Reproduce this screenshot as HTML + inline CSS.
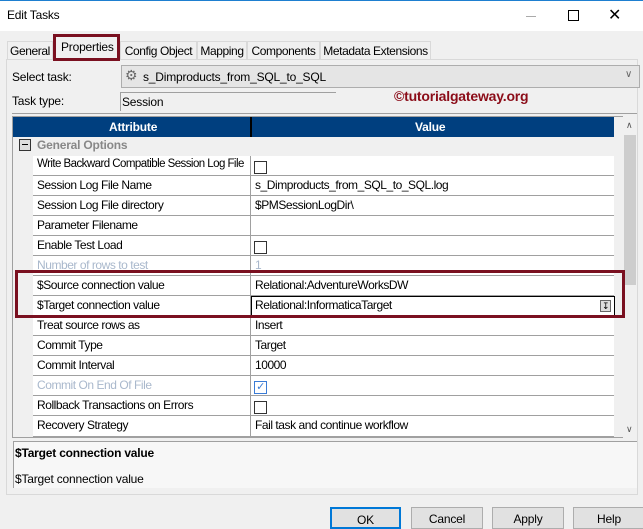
<!DOCTYPE html>
<html><head><style>
*{margin:0;padding:0;box-sizing:border-box}
body{width:643px;height:525px;background:#f0f0f0;font-family:"Liberation Sans",Arial,sans-serif;font-size:12px;color:#000;position:relative;overflow:hidden;letter-spacing:-0.2px}
.a{position:absolute}
.t{position:absolute;white-space:nowrap}
.row{position:absolute;left:33px;width:581px;height:20px;border-bottom:1px solid #a0a0a0;background:#fff;letter-spacing:-0.45px}
.row .l{position:absolute;left:4px;top:2px;white-space:nowrap}
.row .v{position:absolute;left:222px;top:2px;white-space:nowrap}
.row .d{position:absolute;left:217px;top:0;width:1px;height:20px;background:#a0a0a0}
.cb{position:absolute;left:221px;top:5px;width:13px;height:13px;border:1px solid #333;background:#fff}
.g{color:#a9b8cc}
.tab{position:absolute;top:41px;height:18px;border:1px solid #d9d9d9;border-bottom:none;background:#f0f0f0;padding:2px 0 0 0;text-align:center;letter-spacing:-0.4px}
.btn{position:absolute;top:507px;height:22px;border:1px solid #adadad;background:#e1e1e1;text-align:center;padding-top:4px}
</style></head><body>
<div class="a" style="left:0;top:0;width:643px;height:31px;background:#fff;border-top:1px solid #1e7fd0"></div>
<div class="t" style="left:7px;top:8px;font-size:12px">Edit Tasks</div>
<div class="a" style="left:526px;top:16px;width:10px;height:1px;background:#aaa"></div>
<div class="a" style="left:568px;top:10px;width:11px;height:11px;border:1px solid #000"></div>
<div class="t" style="left:608px;top:5px;font-size:16px">✕</div>

<div class="a" style="left:6px;top:59px;width:632px;height:436px;border:1px solid #d9d9d9;background:#f0f0f0"></div>
<div class="tab" style="left:7px;width:46px">General</div>
<div class="tab" style="left:120px;width:77px">Config Object</div>
<div class="tab" style="left:197px;width:50px">Mapping</div>
<div class="tab" style="left:247px;width:73px">Components</div>
<div class="tab" style="left:320px;width:111px">Metadata Extensions</div>
<div class="a" style="left:53px;top:34px;width:67px;height:27px;border:3px solid #7a1020;background:#f0f0f0"></div>
<div class="t" style="left:61px;top:40px">Properties</div>

<div class="t" style="left:12px;top:70px">Select task:</div>
<div class="a" style="left:121px;top:65px;width:519px;height:23px;border:1px solid #adadad;background:#e5e5e5"></div>
<div class="t" style="left:125px;top:67px;font-size:14px;color:#666">⚙</div>
<div class="t" style="left:143px;top:70px">s_Dimproducts_from_SQL_to_SQL</div>
<div class="t" style="left:625px;top:69px;color:#666;font-size:10px">∨</div>
<div class="t" style="left:12px;top:94px">Task type:</div>
<div class="a" style="left:120px;top:92px;width:216px;height:19px;border-top:1px solid #a0a0a0;border-left:1px solid #a0a0a0"></div>
<div class="t" style="left:122px;top:95px">Session</div>
<div class="t" style="left:394px;top:88px;font-weight:bold;font-size:14px;color:#8b0c18">©tutorialgateway.org</div>
<div class="a" style="left:12px;top:113px;width:625px;height:1px;background:#a0a0a0"></div>

<div class="a" style="left:12px;top:116px;width:611px;height:322px;border:1px solid #a0a0a0;background:#f0f0f0"></div>
<div class="a" style="left:13px;top:117px;width:601px;height:20px;background:#003f7f"></div>
<div class="a" style="left:250px;top:117px;width:2px;height:20px;background:#000"></div>
<div class="t" style="left:109px;top:120px;color:#fff;font-weight:bold">Attribute</div>
<div class="t" style="left:415px;top:120px;color:#fff;font-weight:bold">Value</div>
<div class="a" style="left:622px;top:117px;width:15px;height:320px;background:#f0f0f0"></div>
<div class="a" style="left:624px;top:135px;width:12px;height:150px;background:#cdcdcd"></div>
<div class="t" style="left:626px;top:120px;font-size:9px;color:#555">∧</div>
<div class="t" style="left:626px;top:424px;font-size:9px;color:#555">∨</div>
<div class="a" style="left:19px;top:139px;width:12px;height:12px;border:1px solid #333;background:#ddd"></div>
<div class="a" style="left:22px;top:144px;width:6px;height:1px;background:#000"></div>
<div class="t" style="left:37px;top:138px;font-weight:bold;color:#888">General Options</div>

<div class="row" style="top:156px"><span class="l" style="font-size:11.5px;letter-spacing:-0.55px">Write Backward Compatible Session Log File</span><div class="d"></div><div class="cb"></div></div>
<div class="row" style="top:176px"><span class="l">Session Log File Name</span><div class="d"></div><span class="v">s_Dimproducts_from_SQL_to_SQL.log</span></div>
<div class="row" style="top:196px"><span class="l">Session Log File directory</span><div class="d"></div><span class="v">$PMSessionLogDir\</span></div>
<div class="row" style="top:216px"><span class="l">Parameter Filename</span><div class="d"></div></div>
<div class="row" style="top:236px"><span class="l">Enable Test Load</span><div class="d"></div><div class="cb"></div></div>
<div class="row" style="top:256px"><span class="l g">Number of rows to test</span><div class="d"></div><span class="v g">1</span></div>
<div class="row" style="top:276px"><span class="l">$Source connection value</span><div class="d"></div><span class="v">Relational:AdventureWorksDW</span></div>
<div class="row" style="top:296px"><span class="l">$Target connection value</span><div class="d"></div><div class="a" style="left:218px;top:0;width:364px;height:20px;border:1px solid #000"></div><span class="v">Relational:InformaticaTarget</span><div class="a" style="left:567px;top:4px;width:11px;height:12px;border:1px solid #666;background:#ddd;font-size:9px;line-height:10px;text-align:center">↧</div></div>
<div class="row" style="top:316px"><span class="l">Treat source rows as</span><div class="d"></div><span class="v">Insert</span></div>
<div class="row" style="top:336px"><span class="l">Commit Type</span><div class="d"></div><span class="v">Target</span></div>
<div class="row" style="top:356px"><span class="l">Commit Interval</span><div class="d"></div><span class="v">10000</span></div>
<div class="row" style="top:376px"><span class="l g">Commit On End Of File</span><div class="d"></div><div class="cb" style="border-color:#3a7bd5;color:#3a7bd5;font-size:11px;line-height:11px;text-align:center">✓</div></div>
<div class="row" style="top:396px"><span class="l">Rollback Transactions on Errors</span><div class="d"></div><div class="cb"></div></div>
<div class="row" style="top:416px;height:21px"><span class="l">Recovery Strategy</span><div class="d" style="height:21px"></div><span class="v">Fail task and continue workflow</span></div>
<div class="a" style="left:15px;top:270px;width:610px;height:48px;border:3px solid #7a1020"></div>

<div class="a" style="left:13px;top:441px;width:624px;height:47px;background:#f7f7f7;border-top:1px solid #a0a0a0;border-left:1px solid #a0a0a0"></div>
<div class="t" style="left:15px;top:446px;font-weight:bold">$Target connection value</div>
<div class="t" style="left:15px;top:472px">$Target connection value</div>

<div class="btn" style="left:330px;width:71px;border:2px solid #0078d7">OK</div>
<div class="btn" style="left:411px;width:72px">Cancel</div>
<div class="btn" style="left:492px;width:72px">Apply</div>
<div class="btn" style="left:573px;width:72px">Help</div>
</body></html>
